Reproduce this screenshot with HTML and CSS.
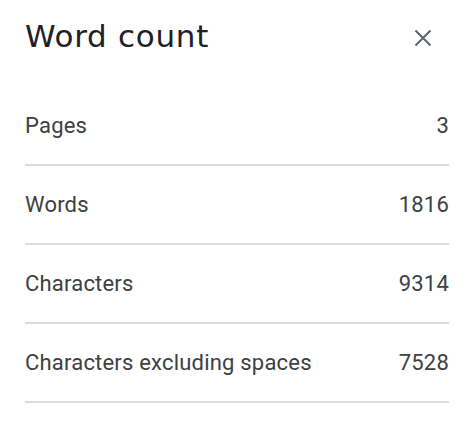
FILE: index.html
```html
<!DOCTYPE html>
<html>
<head>
<meta charset="utf-8">
<link rel="stylesheet" href="styles.css">
</head>
<body>
<div class="dialog">
  <div class="header">
    <h1 class="title">Word count</h1>
    <button class="close" aria-label="Close">
      <svg width="18" height="18" viewBox="0 0 18 18"><path d="M1.5 1.5 L16.5 16.5 M16.5 1.5 L1.5 16.5" stroke="#5f6368" stroke-width="2" fill="none"/></svg>
    </button>
  </div>
  <div class="row"><span>Pages</span><span>3</span></div>
  <div class="row"><span>Words</span><span>1816</span></div>
  <div class="row"><span>Characters</span><span>9314</span></div>
  <div class="row"><span>Characters excluding spaces</span><span>7528</span></div>
</div>
</body>
</html>
```
FILE: styles.css
```css
html, body {
  margin: 0;
  padding: 0;
  background: #ffffff;
}
.dialog {
  padding: 0 23px 0 25px;
  font-family: Roboto, "Liberation Sans", sans-serif;
}
.header {
  height: 87px;
  display: flex;
  justify-content: space-between;
  align-items: flex-start;
}
.title {
  margin: 16px 0 0 0;
  font-family: "DejaVu Sans", "Open Sans", sans-serif;
  font-weight: 400;
  font-size: 31px;
  line-height: 40px;
  color: #202124;
  letter-spacing: 0.7px;
}
.close {
  margin: 29px 17px 0 0;
  padding: 0;
  border: 0;
  background: none;
  width: 18px;
  height: 18px;
  display: block;
}
.close svg { display: block; }
.row {
  height: 77px;
  border-bottom: 2px solid #dadce0;
  display: flex;
  justify-content: space-between;
  align-items: center;
  font-size: 22px;
  line-height: 77px;
  color: #3c4043;
  letter-spacing: 0.2px;
}
```
